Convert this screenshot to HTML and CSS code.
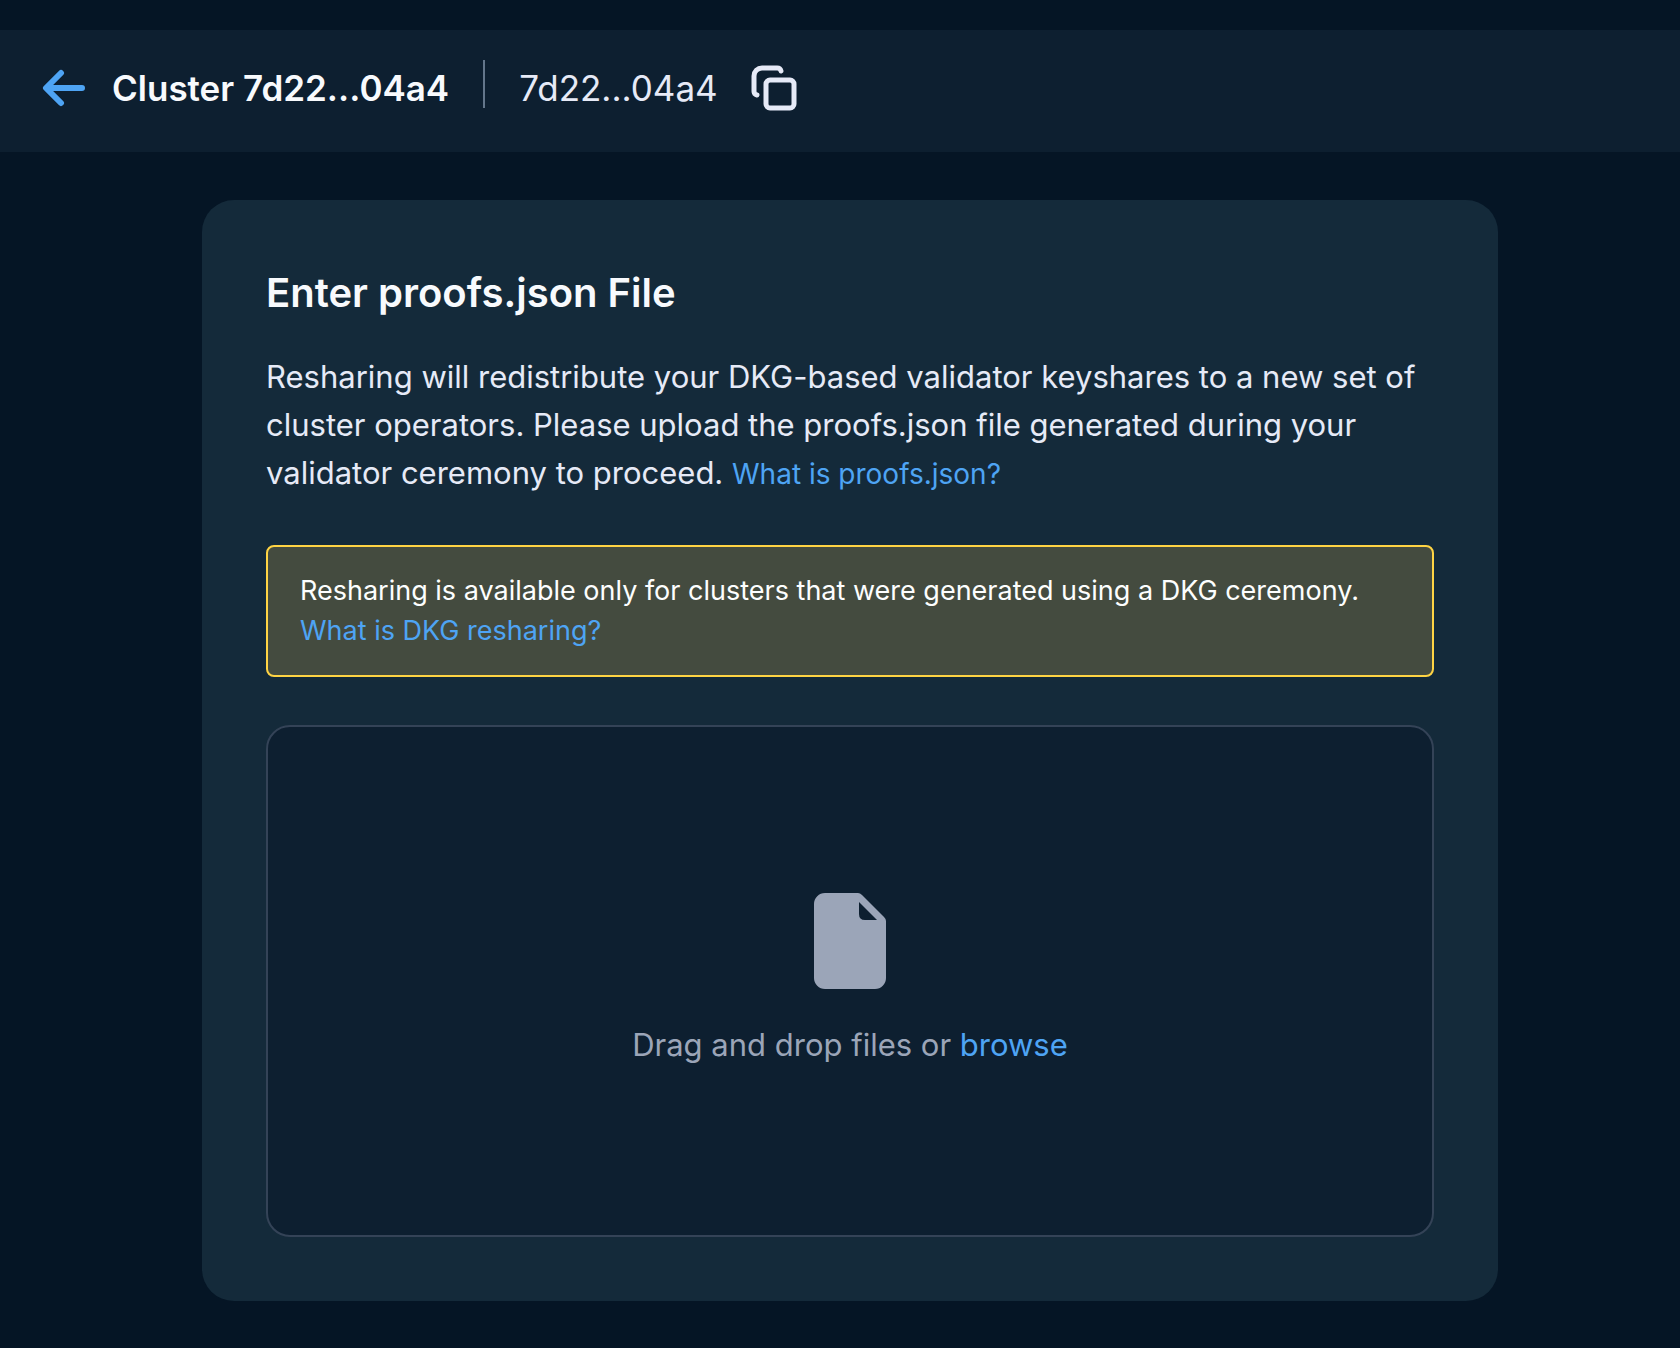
FILE: index.html
```html
<!DOCTYPE html>
<html lang="en">
<head>
  <meta charset="utf-8">
  <meta name="viewport" content="width=device-width, initial-scale=1">
  <title>Cluster 7d22...04a4</title>
  <link rel="stylesheet" href="styles.css">
</head>
<body>
  <header class="topbar">
    <a class="back" href="#" aria-label="Back">
      <svg width="44" height="38" viewBox="0 0 44 38" fill="none" stroke="currentColor" stroke-width="6" stroke-linecap="round" stroke-linejoin="round" aria-hidden="true">
        <path d="M40 19H5M19 4 4 19l15 15"/>
      </svg>
    </a>
    <h1 class="cluster-name">Cluster 7d22...04a4</h1>
    <span class="divider"></span>
    <span class="cluster-id">7d22...04a4</span>
    <button class="copy" type="button" aria-label="Copy cluster ID">
      <svg width="48" height="48" viewBox="0 0 48 48" fill="none" stroke="currentColor" stroke-width="5" stroke-linecap="round" stroke-linejoin="round" aria-hidden="true">
        <rect x="16" y="16" width="28" height="28" rx="4"/>
        <path d="M7 31a4 4 0 0 1-3-4V12a8 8 0 0 1 8-8h15a4 4 0 0 1 4 3"/>
      </svg>
    </button>
  </header>

  <main class="content">
    <section class="card">
      <h2 class="title">Enter proofs.json File</h2>
      <p class="description">Resharing will redistribute your DKG-based validator keyshares to a new set of cluster operators. Please upload the proofs.json file generated during your validator ceremony to proceed. <a class="link link-small" href="#">What is proofs.json?</a></p>
      <div class="notice">
        <p>Resharing is available only for clusters that were generated using a DKG ceremony.</p>
        <a class="link" href="#">What is DKG resharing?</a>
      </div>
      <div class="dropzone">
        <svg width="72" height="96" viewBox="0 0 72 96" fill="currentColor" aria-hidden="true">
          <path fill-rule="evenodd" d="M11 0H44Q46 0 48 2L70 24Q72 26 72 28V85A11 11 0 0 1 61 96H11A11 11 0 0 1 0 85V11A11 11 0 0 1 11 0ZM45 9V21Q45 27 51 27H63Z"/>
        </svg>
        <p>Drag and drop files or <button class="browse link" type="button">browse</button></p>
      </div>
    </section>
  </main>
</body>
</html>
```
FILE: styles.css
```css
* {
  box-sizing: border-box;
}

body {
  margin: 0;
  padding-top: 30px;
  min-height: 100vh;
  background: #051525;
  color: #e6eaf7;
  font-family: Inter, "Liberation Sans", sans-serif;
}

h1,
h2,
p {
  margin: 0;
}

button {
  padding: 0;
  border: 0;
  background: none;
  color: inherit;
  font: inherit;
  cursor: pointer;
}

svg {
  display: block;
}

.topbar {
  display: flex;
  align-items: center;
  padding: 30px 42px 36px;
  background: #0d1f30;
  font-size: 35px;
  line-height: 56px;
}

.back {
  margin-right: 26px;
  color: #4ea4f4;
}

.cluster-name {
  color: #f8fafd;
  font-size: 35px;
  font-weight: 600;
}

.divider {
  align-self: flex-start;
  width: 2px;
  height: 48px;
  margin: 0 34px;
  background: #63768b;
}

.copy {
  margin-left: 32px;
}

.content {
  padding: 48px 20px 48px 40px;
}

.card {
  max-width: 1296px;
  margin: 0 auto;
  padding: 64px;
  border-radius: 32px;
  background: #142a3a;
}

.title {
  margin-bottom: 32px;
  color: #f8fafd;
  font-size: 40px;
  font-weight: 600;
  line-height: 57px;
}

.description {
  margin-bottom: 48px;
  font-size: 31px;
  line-height: 48px;
}

.link {
  color: #4ea4f4;
  text-decoration: none;
}

.link-small {
  font-size: 28px;
  line-height: 40px;
}

.notice {
  margin-bottom: 48px;
  padding: 24px 32px;
  border: 2px solid #ffd444;
  border-radius: 8px;
  background: #444b3f;
  color: #fdfefe;
  font-size: 27px;
  line-height: 40px;
}

.dropzone {
  display: flex;
  flex-direction: column;
  align-items: center;
  justify-content: center;
  gap: 32px;
  min-height: 512px;
  border: 2px solid #344357;
  border-radius: 24px;
  background: #0d1f30;
  color: #9ba5b8;
  font-size: 31px;
  line-height: 48px;
}
```
